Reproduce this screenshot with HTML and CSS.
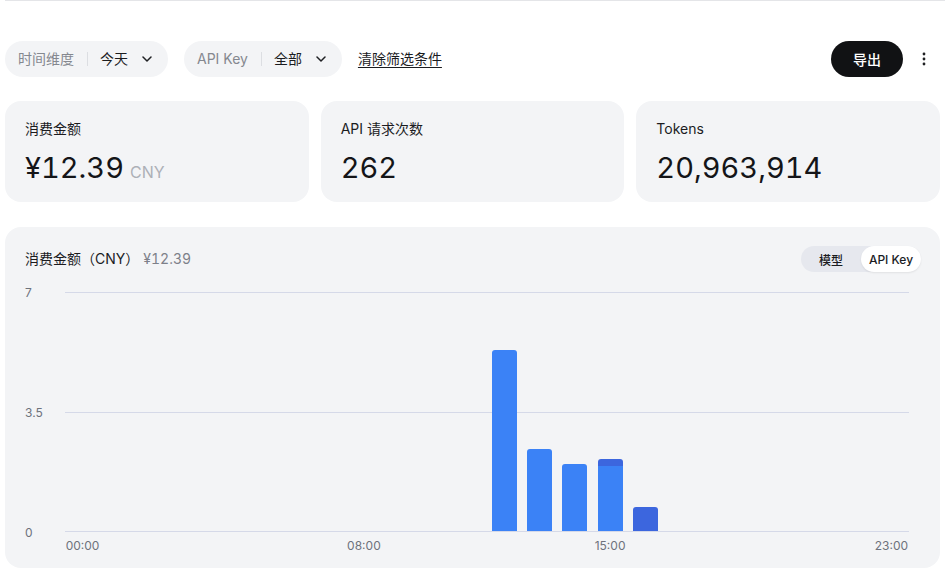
FILE: index.html
```html
<!DOCTYPE html>
<html lang="zh-CN">
<head>
    <meta charset="UTF-8">
    <meta name="viewport" content="width=device-width, initial-scale=1.0">
    <title>用量</title>
    <link rel="stylesheet" href="styles.css">
</head>
<body>
    <div class="topline"></div>
    <div class="page">
        <div class="filters">
            <div class="pill">
                <span class="pill-label">时间维度</span>
                <span class="pill-sep"></span>
                <span class="pill-value">今天</span>
                <svg class="chev" width="10" height="6" viewBox="0 0 10 6"><path d="M1 1l4 4 4-4" fill="none" stroke="#1f2023" stroke-width="1.5" stroke-linecap="round" stroke-linejoin="round"/></svg>
            </div>
            <div class="pill">
                <span class="pill-label">API Key</span>
                <span class="pill-sep"></span>
                <span class="pill-value">全部</span>
                <svg class="chev" width="10" height="6" viewBox="0 0 10 6"><path d="M1 1l4 4 4-4" fill="none" stroke="#1f2023" stroke-width="1.5" stroke-linecap="round" stroke-linejoin="round"/></svg>
            </div>
            <a class="clear-link" href="#">清除筛选条件</a>
            <div class="spacer"></div>
            <button class="export-btn">导出</button>
            <button class="more-btn">
                <svg width="4" height="14" viewBox="0 0 4 14"><circle cx="2" cy="2" r="1.4" fill="#1f2023"/><circle cx="2" cy="7" r="1.4" fill="#1f2023"/><circle cx="2" cy="12" r="1.4" fill="#1f2023"/></svg>
            </button>
        </div>

        <div class="stats">
            <div class="stat-card">
                <div class="stat-label">消费金额</div>
                <div class="stat-value">¥12.39<span class="stat-unit">CNY</span></div>
            </div>
            <div class="stat-card">
                <div class="stat-label">API 请求次数</div>
                <div class="stat-value">262</div>
            </div>
            <div class="stat-card">
                <div class="stat-label">Tokens</div>
                <div class="stat-value">20,963,914</div>
            </div>
        </div>

        <div class="chart-card">
            <div class="chart-head">
                <div class="chart-title">消费金额（CNY）<span class="chart-total">¥12.39</span></div>
                <div class="toggle">
                    <span class="toggle-item">模型</span>
                    <span class="toggle-item active">API Key</span>
                </div>
            </div>
            <div class="chart-body">
                <div class="y-axis">
                    <span>7</span>
                    <span>3.5</span>
                    <span>0</span>
                </div>
                <div class="plot-wrap">
                    <div class="plot">
                        <div class="slot"></div><div class="slot"></div><div class="slot"></div><div class="slot"></div>
                        <div class="slot"></div><div class="slot"></div><div class="slot"></div><div class="slot"></div>
                        <div class="slot"></div><div class="slot"></div><div class="slot"></div><div class="slot"></div>
                        <div class="slot"><div class="bar"><div class="seg light" style="height: 181px"></div></div></div>
                        <div class="slot"><div class="bar"><div class="seg light" style="height: 82px"></div></div></div>
                        <div class="slot"><div class="bar"><div class="seg light" style="height: 67px"></div></div></div>
                        <div class="slot"><div class="bar"><div class="seg dark" style="height: 7px"></div><div class="seg light" style="height: 65px"></div></div></div>
                        <div class="slot"><div class="bar"><div class="seg dark" style="height: 24px"></div></div></div>
                        <div class="slot"></div><div class="slot"></div><div class="slot"></div>
                        <div class="slot"></div><div class="slot"></div><div class="slot"></div><div class="slot"></div>
                    </div>
                    <div class="x-axis">
                        <span class="x-label" style="grid-column: 1">00:00</span>
                        <span class="x-label" style="grid-column: 9">08:00</span>
                        <span class="x-label" style="grid-column: 16">15:00</span>
                        <span class="x-label" style="grid-column: 24">23:00</span>
                    </div>
                </div>
            </div>
        </div>
    </div>
</body>
</html>
```

FILE: styles.css
```css
* {
    box-sizing: border-box;
}
body {
    margin: 0;
    background: #fff;
    color: #1b1c1f;
    font-family: Inter, "Noto Sans CJK SC", sans-serif;
    font-size: 14px;
}
.topline {
    height: 1px;
    margin-left: 5px;
    background: #e4e5e8;
}
.page {
    padding: 0 5px;
}
.filters {
    display: flex;
    align-items: center;
    margin-top: 40px;
    height: 36px;
}
.pill {
    display: flex;
    align-items: center;
    height: 36px;
    padding: 0 16px 0 13px;
    background: #f3f4f6;
    border-radius: 18px;
    margin-right: 16px;
}
.pill-label {
    color: #85888f;
    line-height: 20px;
}
.pill-sep {
    width: 1px;
    height: 14px;
    background: #dcdee2;
    margin: 0 12px 0 13px;
}
.pill-value {
    color: #1b1c1f;
    line-height: 20px;
}
.chev {
    margin-left: 14px;
}
.clear-link {
    color: #1b1c1f;
    text-decoration: underline;
    text-underline-offset: 3px;
    line-height: 20px;
}
.spacer {
    flex: 1;
}
.export-btn {
    height: 36px;
    padding: 0 22px;
    background: #111214;
    color: #fff;
    border: none;
    border-radius: 18px;
    font-family: inherit;
    font-size: 14px;
    font-weight: 500;
    cursor: pointer;
}
.more-btn {
    width: 32px;
    height: 36px;
    margin-left: 5px;
    display: flex;
    align-items: center;
    justify-content: center;
    background: none;
    border: none;
    padding: 0;
    cursor: pointer;
}
.stats {
    display: grid;
    grid-template-columns: repeat(3, 1fr);
    gap: 12px;
    margin-top: 24px;
}
.stat-card {
    background: #f3f4f6;
    border-radius: 16px;
    padding: 18px 20px 16px;
    height: 101px;
}
.stat-label {
    font-size: 14px;
    line-height: 20px;
    color: #1b1c1f;
}
.stat-value {
    margin-top: 11px;
    font-size: 29px;
    line-height: 36px;
    color: #141518;
    font-variant-numeric: tabular-nums;
}
.stat-unit {
    font-size: 16px;
    color: #adb0b6;
    margin-left: 6px;
}
.chart-card {
    margin-top: 25px;
    background: #f3f4f6;
    border-radius: 16px;
    padding: 19px 19px 14px 20px;
}
.chart-head {
    display: flex;
    align-items: center;
    justify-content: space-between;
    height: 26px;
}
.chart-title {
    font-size: 14px;
    line-height: 20px;
    color: #1b1c1f;
}
.chart-total {
    color: #7d8089;
    margin-left: 4px;
    font-variant-numeric: tabular-nums;
}
.toggle {
    display: flex;
    height: 26px;
    background: #e6e8ee;
    border-radius: 13px;
}
.toggle-item {
    width: 60px;
    display: flex;
    align-items: center;
    justify-content: center;
    font-size: 12px;
    font-weight: 500;
    color: #1b1c1f;
    border-radius: 13px;
}
.toggle-item.active {
    background: #fff;
    box-shadow: 0 1px 2px rgba(0, 0, 0, 0.08);
}
.chart-body {
    display: flex;
    align-items: flex-start;
    margin-top: 20px;
}
.y-axis {
    width: 40px;
    height: 256px;
    margin-top: -7px;
    display: flex;
    flex-direction: column;
    justify-content: space-between;
    font-size: 12px;
    line-height: 16px;
    color: #6e727c;
}
.plot-wrap {
    flex: 1;
    margin-right: 12px;
}
.plot {
    height: 240px;
    display: flex;
    align-items: flex-end;
    border-top: 1px solid #d5d9e8;
    border-bottom: 1px solid #d5d9e8;
    background: linear-gradient(#d5d9e8, #d5d9e8) center / 100% 1px no-repeat;
}
.slot {
    flex: 1;
    display: flex;
    justify-content: center;
    align-items: flex-end;
}
.bar {
    width: 25px;
    display: flex;
    flex-direction: column;
    border-radius: 3px 3px 0 0;
    overflow: hidden;
}
.seg.light {
    background: #3b82f6;
}
.seg.dark {
    background: #3c66de;
}
.x-axis {
    display: grid;
    grid-template-columns: repeat(24, 1fr);
    margin-top: 6px;
    font-size: 12px;
    line-height: 16px;
    color: #6e727c;
}
.x-label {
    grid-row: 1;
    text-align: center;
    white-space: nowrap;
    display: flex;
    justify-content: center;
}
```
